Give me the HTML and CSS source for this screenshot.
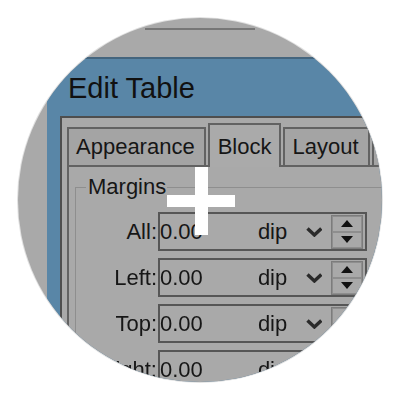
FILE: index.html
```html
<!DOCTYPE html>
<html lang="en">
<head>
  <meta charset="UTF-8" />
  <meta name="viewport" content="width=device-width, initial-scale=1.0"/>
  <title>Edit Table - magnifier</title>
<link rel="stylesheet" href="styles.css"></head>
<body>
  <div class="lens">
    <div class="frame-edge"></div>

    <div class="window">
      <div class="title">Edit Table</div>

      <div class="client">
        <div class="tabs">
          <div class="tab">Appearance</div>
          <div class="tab active">Block</div>
          <div class="tab">Layout</div>
          <div class="tab stub"></div>
        </div>

        <div class="panel">
          <fieldset class="group">
            <legend>Margins</legend>

            <div class="rows">
              <span class="label">All:</span>
              <div class="field">
                <span class="value">0.00</span>
                <span class="unit">dip</span>
                <svg class="chevron" width="17" height="10" viewBox="0 0 17 10"><polyline points="1.5,1.5 8.5,8 15.5,1.5" fill="none" stroke="#2a2a2a" stroke-width="3.5"/></svg>
                <div class="spin">
                  <div class="spin-btn"><svg width="12" height="7" viewBox="0 0 12 7"><polygon points="6,0 12,7 0,7" fill="#111"/></svg></div>
                  <div class="spin-btn"><svg width="12" height="7" viewBox="0 0 12 7"><polygon points="0,0 12,0 6,7" fill="#111"/></svg></div>
                </div>
              </div>

              <span class="label">Left:</span>
              <div class="field">
                <span class="value">0.00</span>
                <span class="unit">dip</span>
                <svg class="chevron" width="17" height="10" viewBox="0 0 17 10"><polyline points="1.5,1.5 8.5,8 15.5,1.5" fill="none" stroke="#2a2a2a" stroke-width="3.5"/></svg>
                <div class="spin">
                  <div class="spin-btn"><svg width="12" height="7" viewBox="0 0 12 7"><polygon points="6,0 12,7 0,7" fill="#111"/></svg></div>
                  <div class="spin-btn"><svg width="12" height="7" viewBox="0 0 12 7"><polygon points="0,0 12,0 6,7" fill="#111"/></svg></div>
                </div>
              </div>

              <span class="label">Top:</span>
              <div class="field">
                <span class="value">0.00</span>
                <span class="unit">dip</span>
                <svg class="chevron" width="17" height="10" viewBox="0 0 17 10"><polyline points="1.5,1.5 8.5,8 15.5,1.5" fill="none" stroke="#2a2a2a" stroke-width="3.5"/></svg>
                <div class="spin">
                  <div class="spin-btn"><svg width="12" height="7" viewBox="0 0 12 7"><polygon points="6,0 12,7 0,7" fill="#111"/></svg></div>
                  <div class="spin-btn"><svg width="12" height="7" viewBox="0 0 12 7"><polygon points="0,0 12,0 6,7" fill="#111"/></svg></div>
                </div>
              </div>

              <span class="label">Right:</span>
              <div class="field">
                <span class="value">0.00</span>
                <span class="unit">dip</span>
                <svg class="chevron" width="17" height="10" viewBox="0 0 17 10"><polyline points="1.5,1.5 8.5,8 15.5,1.5" fill="none" stroke="#2a2a2a" stroke-width="3.5"/></svg>
                <div class="spin">
                  <div class="spin-btn"><svg width="12" height="7" viewBox="0 0 12 7"><polygon points="6,0 12,7 0,7" fill="#111"/></svg></div>
                  <div class="spin-btn"><svg width="12" height="7" viewBox="0 0 12 7"><polygon points="0,0 12,0 6,7" fill="#111"/></svg></div>
                </div>
              </div>
            </div>
          </fieldset>
        </div>
      </div>
    </div>

    <!-- magnifier crosshair -->
    <svg class="crosshair" width="68" height="68" viewBox="0 0 68 68">
      <rect x="0" y="28" width="68" height="12" fill="#fff"/>
      <rect x="28" y="0" width="13" height="68" fill="#fff"/>
    </svg>
  </div>
</body>
</html>
```

FILE: styles.css
```css
body {
  margin: 0;
  padding: 18px;
  background: #fff;
  font-family: "Liberation Sans", Arial, sans-serif;
  color: #161616;
}

.lens {
  position: relative;
  width: 364px;
  height: 364px;
  border-radius: 50%;
  overflow: hidden;
  background: #a9a9a9;
  box-shadow: 0 0 0 1px rgba(0,0,0,0.12);
  filter: blur(0.4px);
}

.frame-edge {
  margin: 10px 0 0 127px;
  width: 110px;
  height: 2px;
  background: #767676;
}

.window {
  margin: 27px 0 0 29px;
  width: 380px;
  background: #5986a7;
  border-top: 2px solid #44657e;
}

.title {
  padding: 12px 0 0 21px;
  margin-bottom: 11px;
  font-size: 29px;
  line-height: 34px;
  color: #111;
}

.client {
  margin-left: 13px;
  padding: 5px 0 0 5px;
  background: #a9a9a9;
  border-top: 2px solid #4e4e4e;
  border-left: 2px solid #4e4e4e;
  height: 300px;
}

.tabs {
  display: flex;
  align-items: flex-end;
  gap: 2px;
  font-size: 22px;
  line-height: 26px;
}

.tab {
  padding: 5px 9px 5px 7px;
  background: #a4a4a4;
  border: 2px solid #626262;
  border-bottom: none;
  white-space: nowrap;
}

.tab.active {
  position: relative;
  z-index: 1;
  padding: 9px 8px 7px 8px;
  margin-bottom: -2px;
  background: #aaaaaa;
}

.tab.stub {
  width: 20px;
  height: 26px;
  padding: 5px 0 5px 0;
}

.panel {
  padding: 7px 0 0 6px;
  border-top: 2px solid #626262;
  border-left: 2px solid #626262;
  height: 260px;
}

.group {
  margin: 0;
  padding: 0;
  min-width: 0;
  border: 1px solid #8e8e8e;
  height: 240px;
}

.group legend {
  margin-left: 10px;
  padding: 0 1px 0 2px;
  font-size: 22px;
  line-height: 26px;
}

.rows {
  display: grid;
  grid-template-columns: 82px 209px;
  row-gap: 7px;
  align-items: center;
  margin-top: 12px;
  font-size: 22px;
  line-height: 26px;
}

.label {
  text-align: right;
  padding-right: 1px;
}

.field {
  display: flex;
  align-items: center;
  height: 35px;
  border: 2px solid #565656;
}

.value {
  width: 99px;
}

.unit {
  width: 30px;
}

.chevron {
  margin-left: 18px;
}

.spin {
  display: flex;
  flex-direction: column;
  margin: 0 2px 0 9px;
  width: 30px;
  border: 1px solid #7c7c7c;
}

.spin-btn {
  display: flex;
  justify-content: center;
  align-items: center;
  height: 14px;
  border: 1px solid #8e8e8e;
}

.crosshair {
  position: absolute;
  left: 149px;
  top: 149px;
}
```
